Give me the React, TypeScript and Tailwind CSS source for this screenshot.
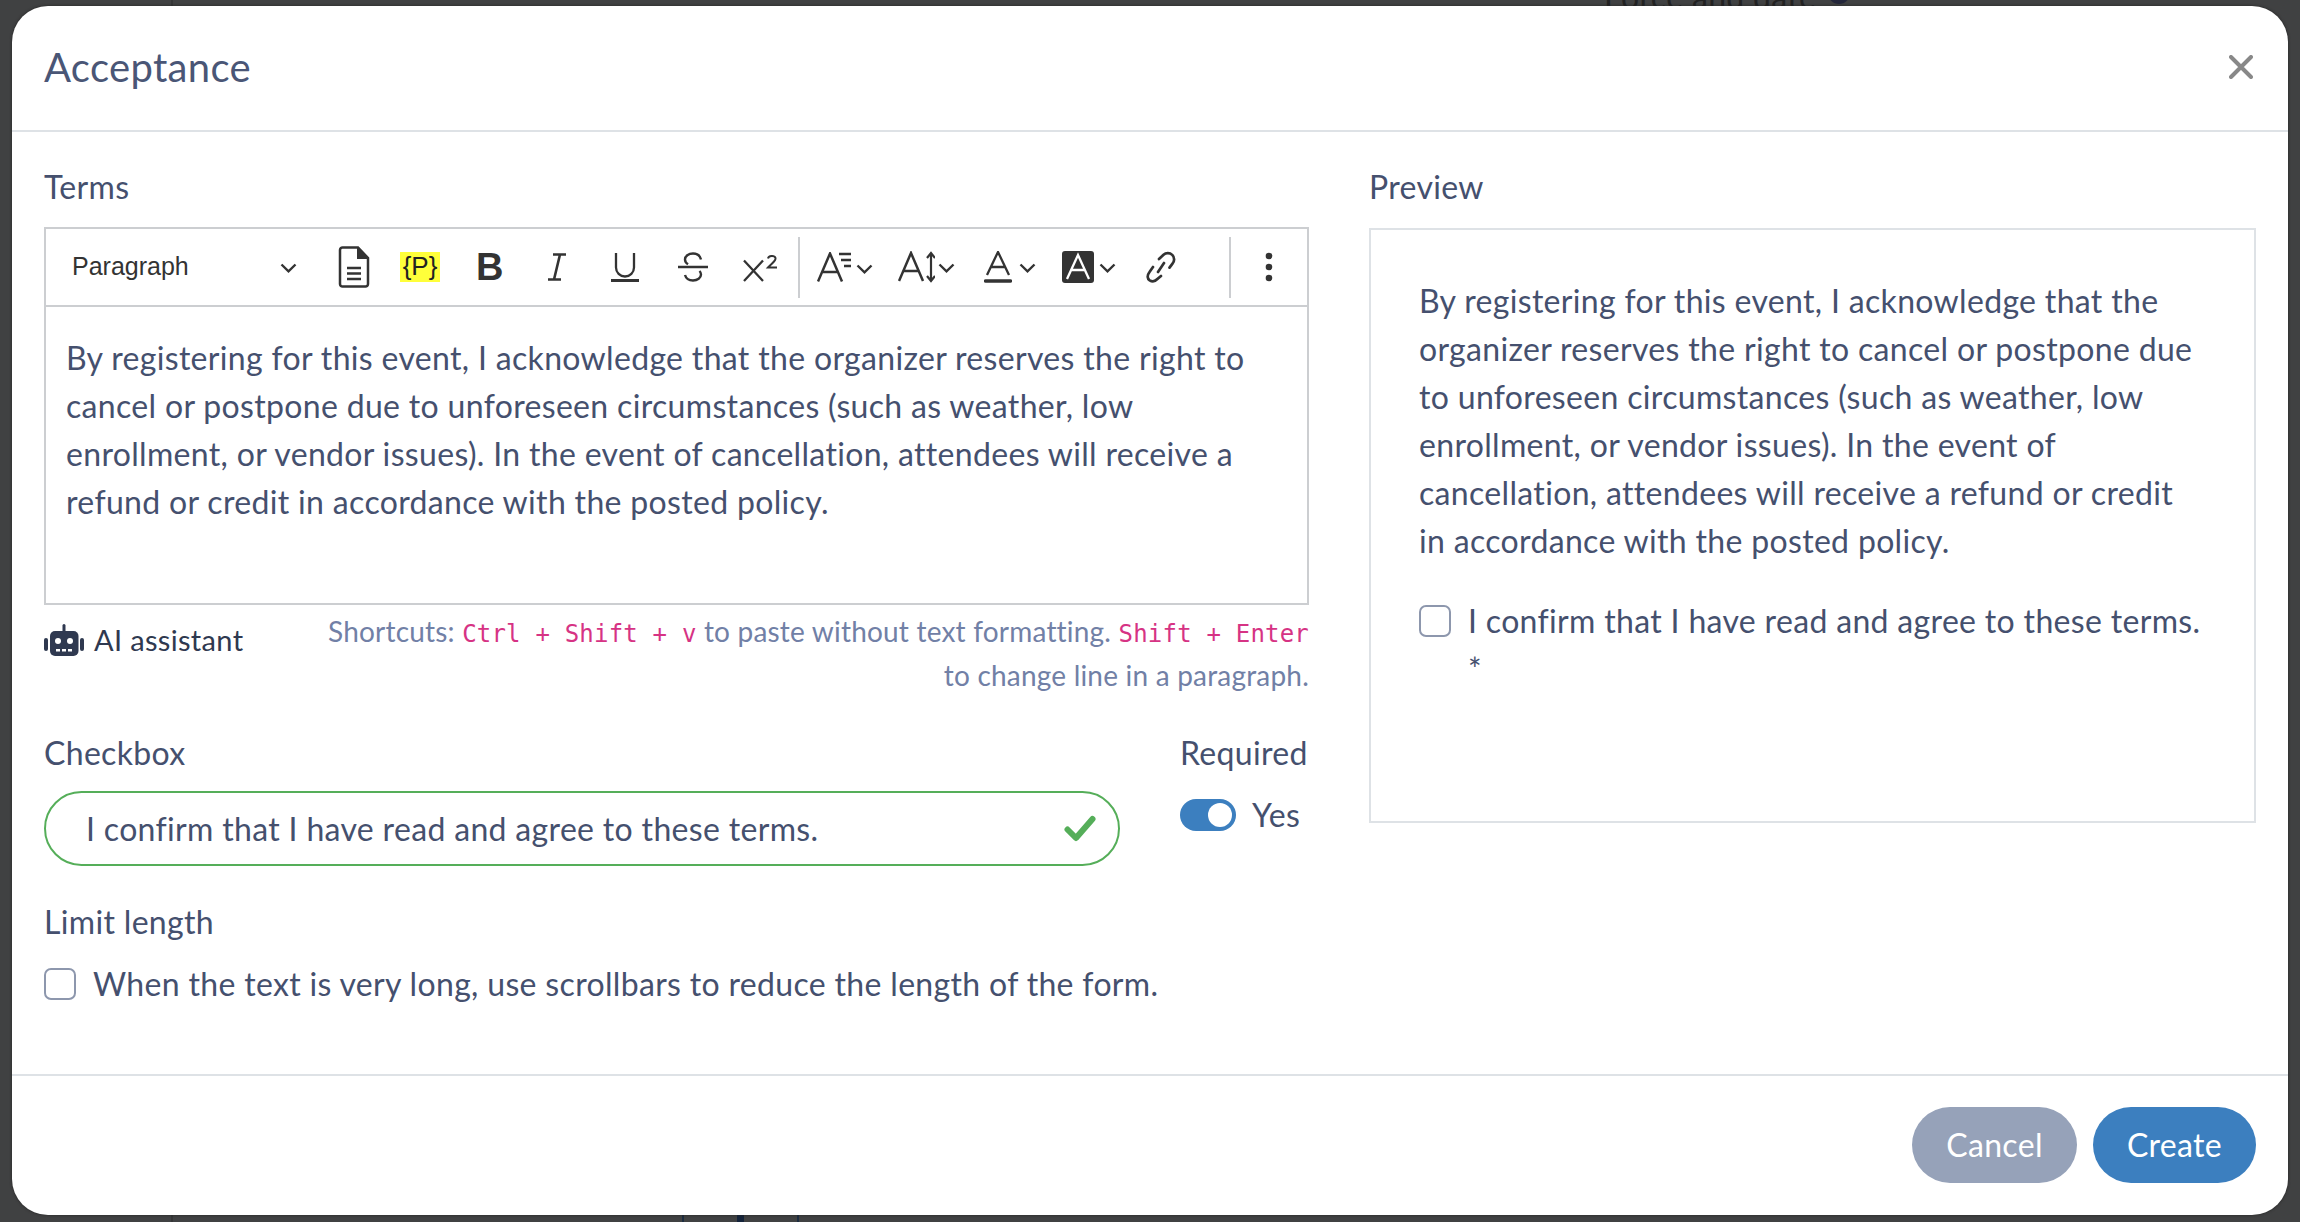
import React from "react";

const Chevron = ({ className = "" }: { className?: string }) => (
  <svg viewBox="0 0 17 10" className={"w-[17px] h-[10px] shrink-0 " + className} fill="none" stroke="#333" strokeWidth="2.400">
    <path d="M1.500 1.500 8.500 8.300l7-6.800" />
  </svg>
);

const Ic = ({ w, h, vb, children, className = "" }: { w: number; h: number; vb: string; children: React.ReactNode; className?: string }) => (
  <svg viewBox={vb} width={w} height={h} fill="none" className={"shrink-0 " + className}>
    {children}
  </svg>
);

const Toolbar = () => (
  <div className="flex items-center h-[78px] border-b-2 border-[#ccced1] pl-[26px] font-['Liberation_Sans',sans-serif] tracking-normal text-[#333]">
    <span className="text-[25px] w-[208px] leading-none mb-[2px]">Paragraph</span>
    <Chevron className="mt-[2px]" />
    <Ic w={32} h={42} vb="0 0 32 42" className="ml-[41px]">
      <path d="M2 4a2.500 2.500 0 0 1 2.500-2.500H20L30 12v26a2.500 2.500 0 0 1-2.500 2.500h-23A2.500 2.500 0 0 1 2 38Z" stroke="#333" strokeWidth="2.500" />
      <path d="M20 2v10h10" stroke="#333" strokeWidth="2" fill="#333" />
      <path d="M9 22h14M9 27.500h14M9 33h14" stroke="#333" strokeWidth="2.500" />
    </Ic>
    <span className="ml-[30px] w-[40px] h-[30px] bg-[#ffff3a] text-[#222] text-[26px] leading-[29px] text-center font-light">{"{P}"}</span>
    <span className="ml-[36px] w-[27px] text-[38px] font-bold leading-none text-center">B</span>
    <Ic w={20} h={28} vb="0 0 20 28" className="ml-[44px]">
      <path d="M6 1.500h13M1 26.500h13M13 1.500 7 26.500" stroke="#333" strokeWidth="2.600" />
    </Ic>
    <Ic w={28} h={30} vb="0 0 28 30" className="ml-[44px]">
      <path d="M5 1v14.500a9 9 0 0 0 18 0V1" stroke="#333" strokeWidth="2.300" />
      <path d="M0 28.500h28" stroke="#333" strokeWidth="3" />
    </Ic>
    <Ic w={30} h={30} vb="0 0 30 30" className="ml-[39px]">
      <path d="M0 15h30" stroke="#333" strokeWidth="2.500" />
      <path d="M23 7.500C22 3.500 19 1.500 15 1.500 10.500 1.500 7 4 7 7.500c0 2 1 3.500 3 4.800M7 23c1 3.500 4 5.500 8 5.500 4.500 0 8-2.500 8-6 0-1.500-.5-2.500-1.500-3.500" stroke="#333" strokeWidth="2.400" />
    </Ic>
    <Ic w={36} h={30} vb="0 0 36 30" className="ml-[35px]">
      <path d="M1 8.500 20 29M20 8.500 1 29" stroke="#333" strokeWidth="2.300" />
      <path d="M25 6.500c.5-3 6.500-3.500 7.500-.5.800 2.800-3.500 5-7.500 9.500h9" stroke="#333" strokeWidth="2" />
    </Ic>
    <span className="ml-[19px] w-[2px] h-[61px] bg-[#ccced1]" />
    <Ic w={36} h={30} vb="0 0 36 30" className="ml-[17px]">
      <path d="M1 29.500 13 1.500l12 28M5 20h16" stroke="#333" strokeWidth="2.500" />
      <path d="M22 2h12M24 8h10M27 14h7" stroke="#333" strokeWidth="2.400" />
    </Ic>
    <Chevron className="ml-[3px] mt-[4px]" />
    <Ic w={37} h={32} vb="0 0 37 32" className="ml-[25px]">
      <path d="M1 30 13 2l12 28M5 20h16" stroke="#333" strokeWidth="2.500" />
      <path d="M33 3v26M29 7l4-5 4 5M29 25l4 5 4-5" stroke="#333" strokeWidth="2.200" />
    </Ic>
    <Chevron className="ml-[3px] mt-[2px]" />
    <Ic w={28} h={33} vb="0 0 28 33" className="ml-[29px]">
      <path d="M3 24 14 1l11 23M7 16h14" stroke="#333" strokeWidth="2.300" />
      <path d="M1.500 30h25" stroke="#333" strokeWidth="3.500" strokeLinecap="round" />
    </Ic>
    <Chevron className="ml-[7px] mt-[2px]" />
    <Ic w={32} h={32} vb="0 0 32 32" className="ml-[26px]">
      <rect width="32" height="32" rx="3" fill="#333" />
      <path d="M5 28 16 4l11 24M9 19h14" stroke="#fff" strokeWidth="2.300" />
    </Ic>
    <Chevron className="ml-[5px] mt-[2px]" />
    <Ic w={30} h={32} vb="0 0 30 32" className="ml-[30px]">
      <path d="M13 8 17.500 3.800a6.300 6.300 0 0 1 9 8.800l-3 4M7 16l-3.500 5c-2.600 3.500-2.300 6.700.2 8.300 2.800 1.700 5.800.8 8-1.500L15 25M12 21l6-9" stroke="#333" strokeWidth="2.700" strokeLinecap="round" />
    </Ic>
    <span className="ml-[53px] w-[2px] h-[61px] bg-[#ccced1]" />
    <Ic w={8} h={30} vb="0 0 8 30" className="ml-[34px]">
      <circle cx="4" cy="4" r="3.300" fill="#333" />
      <circle cx="4" cy="15" r="3.300" fill="#333" />
      <circle cx="4" cy="26" r="3.300" fill="#333" />
    </Ic>
  </div>
);

const Robot = () => (
  <svg viewBox="0 0 40 32" width="40" height="32" className="shrink-0">
    <rect x="6" y="7" width="28.500" height="25" rx="5" fill="#2f3950" />
    <rect x="18.500" y="0" width="3" height="9" rx="1.500" fill="#2f3950" />
    <rect x="0" y="14" width="4" height="13" rx="2" fill="#2f3950" />
    <rect x="36" y="14" width="4" height="13" rx="2" fill="#2f3950" />
    <circle cx="14" cy="17" r="3" fill="#fff" />
    <circle cx="26" cy="17" r="3" fill="#fff" />
    <rect x="12" y="25" width="4" height="2.500" fill="#fff" />
    <rect x="18" y="25" width="4" height="2.500" fill="#fff" />
    <rect x="24" y="25" width="4" height="2.500" fill="#fff" />
  </svg>
);

const Box = () => (
  <span className="block shrink-0 w-[32px] h-[32px] rounded-[7px] border-2 border-[#8d97ad] bg-white" />
);

const Code = ({ children }: { children: React.ReactNode }) => (
  <code className="font-['DejaVu_Sans_Mono',monospace] text-[#d63384] text-[24px]">{children}</code>
);

export default function App() {
  return (
    <div className="relative h-screen w-full bg-[#404142] pt-[6px] pl-[12px] pr-[12px] pb-[7px] overflow-hidden font-['Lato','Noto_Sans',sans-serif] text-[32px] leading-[48px] text-[#45506e] tracking-[0.33px]">
      <span className="absolute left-[171px] top-0 bottom-0 w-[2px] bg-[#353637]" />
      <span className="absolute left-[682px] top-[1215px] bottom-0 w-[2px] bg-[#1c2c40]" />
      <span className="absolute left-[737px] top-[1215px] bottom-0 w-[7px] bg-[#14233a]" />
      <span className="absolute left-[797px] top-[1215px] bottom-0 w-[2px] bg-[#1c2c40]" />
      <span className="absolute left-[1604px] top-[-27px] text-[#222] whitespace-nowrap">Force and date</span>
      <span className="absolute left-[1828px] top-[-18px] w-[22px] h-[22px] rounded-full bg-[#23263a]" />
      <div className="relative h-full bg-white rounded-[36px] flex flex-col shadow-[0_0_3px_#222]">
        <header className="h-[126px] shrink-0 border-b-2 border-[#dee2e6] flex items-center justify-between pl-[32px] pr-[35px] pb-[2px]">
          <h1 className="text-[40px] leading-none text-[#4a5676]">Acceptance</h1>
          <svg viewBox="0 0 24 24" width="24" height="24" fill="none" stroke="#888" strokeWidth="4" strokeLinecap="round">
            <path d="M2 2l20 20M22 2 2 22" />
          </svg>
        </header>

        <main className="flex-1 flex pl-[32px] pr-[32px] pt-[31px] gap-[60px]">
          <section className="w-[1265px] shrink-0">
            <div className="h-[47px] leading-[47px]">Terms</div>
            <div className="mt-[17px] h-[378px] border-2 border-[#ccced1]">
              <Toolbar />
              <div className="px-[20px] pt-[27px] text-[#45506e]">
                By registering for this event, I acknowledge that the organizer reserves the right to<br />
                cancel or postpone due to unforeseen circumstances (such as weather, low<br />
                enrollment, or vendor issues). In the event of cancellation, attendees will receive a<br />
                refund or credit in accordance with the posted policy.
              </div>
            </div>

            <div className="flex justify-between mt-[6px]">
              <div className="flex items-center gap-[10px] h-[44px] mt-[7px] text-[29px] text-[#2f3950]">
                <Robot />
                <span>AI assistant</span>
              </div>
              <p className="w-[1010px] text-right text-[28px] leading-[41px] tracking-[0.2px] text-[#7180a6]">
                Shortcuts: <Code>Ctrl + Shift + v</Code> to paste without text formatting. <Code>Shift + Enter</Code><br />
                to change line in a paragraph.
              </p>
            </div>

            <div className="flex justify-between mt-[33px]">
              <div className="w-[1076px]">
                <div className="h-[47px] leading-[47px]">Checkbox</div>
                <div className="mt-[15px] h-[75px] rounded-full border-2 border-[#55ae59] flex items-center justify-between pl-[40px] pr-[22px]">
                  <span>I confirm that I have read and agree to these terms.</span>
                  <svg viewBox="0 0 32 27" width="32" height="27" fill="none" stroke="#55ae59" strokeWidth="6" strokeLinecap="round" strokeLinejoin="round">
                    <path d="M3.500 14.500 12 23 28.500 4" />
                  </svg>
                </div>
              </div>
              <div className="w-[129px]">
                <div className="h-[47px] leading-[47px] whitespace-nowrap">Required</div>
                <div className="flex items-center mt-[23px] h-[32px] gap-[16px]">
                  <span className="w-[56px] h-[32px] rounded-full bg-[#3c7fbf] flex items-center justify-end pr-[4px]">
                    <span className="w-[24px] h-[24px] rounded-full bg-white" />
                  </span>
                  <span>Yes</span>
                </div>
              </div>
            </div>

            <div className="h-[47px] leading-[47px] mt-[32px]">Limit length</div>
            <div className="flex items-center gap-[17px] mt-[15px]">
              <Box />
              <span>When the text is very long, use scrollbars to reduce the length of the form.</span>
            </div>
          </section>

          <section className="flex-1">
            <div className="h-[47px] leading-[47px]">Preview</div>
            <div className="mt-[18px] h-[595px] border-2 border-[#dee2e6] pl-[48px] pt-[47px]">
              By registering for this event, I acknowledge that the<br />
              organizer reserves the right to cancel or postpone due<br />
              to unforeseen circumstances (such as weather, low<br />
              enrollment, or vendor issues). In the event of<br />
              cancellation, attendees will receive a refund or credit<br />
              in accordance with the posted policy.
              <div className="flex mt-[32px] gap-[17px]">
                <span className="mt-[8px]"><Box /></span>
                <span>I confirm that I have read and agree to these terms.<br />*</span>
              </div>
            </div>
          </section>
        </main>

        <footer className="h-[141px] shrink-0 border-t-2 border-[#dee2e6] flex justify-end items-start pt-[31px] pr-[32px] gap-[16px] text-[32px]">
          <button className="w-[165px] h-[76px] rounded-full bg-[#96a2b9] text-white">Cancel</button>
          <button className="w-[163px] h-[76px] rounded-full bg-[#3c7fbf] text-white">Create</button>
        </footer>
      </div>
    </div>
  );
}
